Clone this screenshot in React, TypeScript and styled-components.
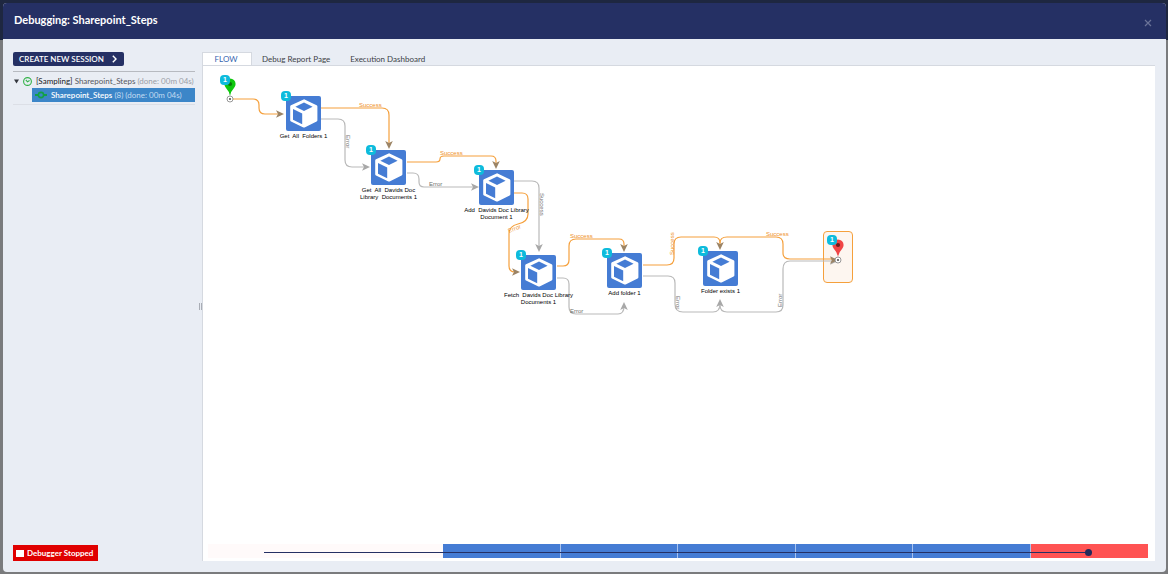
import React, { useState } from "react";
import styled, { createGlobalStyle, css } from "styled-components";

const GlobalStyle = createGlobalStyle`
  *, *::before, *::after { box-sizing: border-box; }
  body {
    margin: 0;
    font-family: Lato, "Open Sans", sans-serif;
    background: #7a7b7d;
  }
  button { font-family: inherit; border: 0; padding: 0; margin: 0; cursor: pointer; }
`;

const navy = "#253064";
const nodeBlue = "#457cd4";
const activeEdge = "#f5a03c";
const idleEdge = "#b9b9b9";

const Backdrop = styled.div`
  min-height: 100vh;
  padding: 3px 2px 2px 3px;
  display: flex;
  background: linear-gradient(#1e2740 0 40px, #7a7b7d 40px);
`;

const Dialog = styled.section`
  flex: 1;
  display: flex;
  flex-direction: column;
  min-width: 0;
  border-radius: 4px;
  overflow: hidden;
  background: #e9edf4;
`;

const Header = styled.header`
  height: 36px;
  display: flex;
  align-items: center;
  justify-content: space-between;
  padding: 0 14px 2px 11px;
  background: ${navy};
`;

const Title = styled.h1`
  margin: 0;
  font-size: 11px;
  line-height: 14px;
  font-weight: 700;
  color: #fff;
`;

const CloseButton = styled.button`
  display: flex;
  margin-top: 6px;
  background: none;
  color: #6b7398;
`;

const Body = styled.div`
  flex: 1;
  display: flex;
  min-height: 0;
  padding: 13px 11px 11px 10px;
`;

const Sidebar = styled.aside`
  width: 182px;
  flex: none;
  display: flex;
  flex-direction: column;
  align-items: stretch;
`;

const NewSession = styled.button`
  align-self: flex-start;
  width: 111px;
  height: 14px;
  padding: 0 7px 0 6px;
  display: flex;
  align-items: center;
  justify-content: space-between;
  border-radius: 2px;
  background: ${navy};
  color: #fff;
  font-size: 8px;
  line-height: 14px;
  font-weight: 600;
`;

const Tree = styled.ul`
  list-style: none;
  margin: 5px 0 0;
  padding: 2px 0;
  border-top: 1px solid #b7bac0;
  border-bottom: 1px solid #dcdfe6;
`;

const TreeRow = styled.li<{ $selected?: boolean }>`
  display: flex;
  align-items: center;
  gap: 4px;
  height: 14px;
  padding-left: 1px;
  font-size: 8px;
  line-height: 14px;
  white-space: nowrap;
  color: #55585f;
  ${(p) =>
    p.$selected &&
    css`
      margin-left: 19px;
      padding-left: 3px;
      background: #3c86c8;
      color: #fff;
    `}
`;

const Phase = styled.span`
  color: #16181d;
`;

const Muted = styled.span<{ $onBlue?: boolean }>`
  color: ${(p) => (p.$onBlue ? "#c3dcf2" : "#9a9da6")};
`;

const Strong = styled.span`
  font-weight: 600;
`;

const Status = styled.div`
  margin-top: auto;
  align-self: flex-start;
  width: 85px;
  height: 16px;
  display: flex;
  align-items: center;
  gap: 3px;
  padding-left: 3px;
  background: #e00000;
  color: #fff;
  font-size: 8px;
  line-height: 16px;
  font-weight: 700;
  white-space: nowrap;
`;

const StopSquare = styled.span`
  flex: none;
  width: 8px;
  height: 7px;
  background: #fff;
`;

const Splitter = styled.div`
  width: 7px;
  flex: none;
  display: flex;
  align-items: center;
  justify-content: flex-end;
`;

const Grip = styled.span`
  width: 3px;
  height: 7px;
  border: solid #a9adb5;
  border-width: 0 1px;
`;

const Main = styled.main`
  flex: 1;
  min-width: 0;
  display: flex;
  flex-direction: column;
`;

const TabBar = styled.div`
  display: flex;
  height: 14px;
`;

const Tab = styled.button<{ $active?: boolean }>`
  height: 14px;
  padding: 0 10px;
  background: none;
  color: #3c3f46;
  font-size: 8px;
  line-height: 14px;
  white-space: nowrap;
  ${(p) =>
    p.$active &&
    css`
      width: 50px;
      padding: 0 2px 2px 0;
      border: 1px solid #d5d9e0;
      border-bottom: 0;
      background: #fff;
      color: #3565b0;
      line-height: 12px;
    `}
`;

const Panel = styled.div`
  flex: 1;
  display: flex;
  flex-direction: column;
  justify-content: space-between;
  margin-top: -1px;
  border: solid #d5d9e0;
  border-width: 1px 0 0 1px;
  background: #fff;
`;

const Canvas = styled.div`
  position: relative;
  flex: 1;
  min-height: 260px;
  overflow: hidden;
  font-family: "Liberation Sans", Arial, sans-serif;
`;

const Wires = styled.svg`
  display: block;
  position: absolute;
  inset: 0;
  width: 100%;
  height: 100%;
`;

const WireLabel = styled.text<{ $active?: boolean }>`
  font-size: 6px;
  fill: ${(p) => (p.$active ? "#ee8f1e" : "#6e6e6e")};
`;

const NodeBox = styled.div`
  position: absolute;
  width: 35px;
  height: 35px;
  display: flex;
  flex-direction: column;
  align-items: center;
`;

const NodeTile = styled.div`
  flex: none;
  width: 35px;
  height: 35px;
  border-radius: 2px;
  background: ${nodeBlue};
`;

const NodeLabel = styled.div`
  margin-top: 2px;
  font-size: 6px;
  line-height: 7px;
  text-align: center;
  white-space: pre;
  color: #000;
`;

const Badge = styled.span`
  position: absolute;
  left: -5px;
  top: -5px;
  width: 10px;
  height: 10px;
  border-radius: 4px;
  background: #0dbbdc;
  color: #fff;
  font-size: 7px;
  line-height: 10px;
  font-weight: 700;
  text-align: center;
`;

const PinBox = styled.div<{ $framed?: boolean }>`
  position: absolute;
  width: 30px;
  height: 52px;
  border-radius: 4px;
  ${(p) =>
    p.$framed &&
    css`
      border: 1px solid ${activeEdge};
      background: #fdf6f0;
    `}
`;

const PinBadge = styled(Badge)`
  left: 4px;
  top: 4px;
`;

const Timeline = styled.div`
  display: grid;
  align-items: center;
  height: 14px;
  margin: 0 7px 3px 5px;
`;

const Segments = styled.div`
  grid-area: 1 / 1;
  display: grid;
  grid-template-columns: repeat(8, 1fr);
  height: 14px;
`;

const segmentColors = { idle: "#fffafa", step: nodeBlue, error: "#ff5353" };

const Segment = styled.span<{ $kind: keyof typeof segmentColors }>`
  background: ${(p) => segmentColors[p.$kind]};
  border-right: ${(p) => (p.$kind === "step" ? "1px solid #a9c3ee" : "0")};
`;

const Scrubber = styled.input`
  grid-area: 1 / 1;
  justify-self: center;
  width: 88%;
  height: 7px;
  margin: 2px 0 0;
  appearance: none;
  background: linear-gradient(${navy}, ${navy}) center / 100% 1px no-repeat;
  &::-webkit-slider-thumb {
    appearance: none;
    width: 7px;
    height: 7px;
    border-radius: 50%;
    background: #22295a;
  }
`;

type Step = { x: number; y: number; label: string };

const steps: Step[] = [
  { x: 83, y: 30, label: "Get  All  Folders 1" },
  { x: 168, y: 84, label: "Get  All  Davids Doc\nLibrary  Documents 1" },
  { x: 276, y: 104, label: "Add  Davids Doc Library\nDocument 1" },
  { x: 318, y: 189, label: "Fetch  Davids Doc Library\nDocuments 1" },
  { x: 404, y: 187, label: "Add folder 1" },
  { x: 500, y: 185, label: "Folder exists 1" },
];

type Wire = { d: string; active?: boolean; tip: [number, number, number] };

/* tip: x, y and rotation of the arrow head, 0 pointing right */
const wires: Wire[] = [
  { d: "M118 53H135Q142 53 142 60V94Q142 101 149 101H164", tip: [167, 101, 0] },
  { d: "M204 107H210Q216 107 216 113V116Q216 121 221 121H273", tip: [276, 121, 0] },
  { d: "M311 115H329Q336 115 336 122V183", tip: [336, 186, 90] },
  { d: "M354 212H360Q366 212 366 218V241Q366 248 373 248H415Q421 248 421 240", tip: [421, 236, -90] },
  { d: "M440 210H465Q472 210 472 217V238Q472 246 480 246H510Q517 246 517 238", tip: [517, 233, -90] },
  { d: "M517 239Q517 246 524 246H573Q580 246 580 239V203Q580 195 587 195H632", tip: [635, 195, 0] },
  { active: true, d: "M30 33H50Q56 33 56 39V42Q56 48 62 48H77", tip: [81, 48, 0] },
  { active: true, d: "M118 42H179Q186 42 186 49V79", tip: [186, 83, 90] },
  { active: true, d: "M204 96H233Q237 96 237 93Q237 90 241 90H288Q293 90 293 95V98", tip: [293, 103, 90] },
  { active: true, d: "M311 127H319Q325 127 325 133V148Q325 156 315 158Q306 160 306 168V200Q306 206 312 206", tip: [317, 206, 0] },
  { active: true, d: "M354 200H360Q366 200 366 194V180Q366 173 373 173H416Q421 173 421 178V181", tip: [421, 186, 90] },
  { active: true, d: "M440 199H464Q471 199 471 192V178Q471 171 478 171H511Q517 171 517 177V180", tip: [517, 184, 90] },
  { active: true, d: "M517 177Q517 171 524 171H573Q580 171 580 178V187Q580 193 587 193H632", tip: [635, 194, 0] },
];

type WireName = { x: number; y: number; text: string; active?: boolean; turn?: number };

const wireNames: WireName[] = [
  { x: 156, y: 41, text: "Success", active: true },
  { x: 143, y: 69, text: "Error", turn: 90 },
  { x: 237, y: 89, text: "Success", active: true },
  { x: 226, y: 120, text: "Error" },
  { x: 337, y: 127, text: "Success", turn: 90 },
  { x: 306, y: 167, text: "Error", active: true, turn: -22 },
  { x: 367, y: 172, text: "Success", active: true },
  { x: 367, y: 247, text: "Error" },
  { x: 471, y: 189, text: "Success", active: true, turn: -90 },
  { x: 473, y: 230, text: "Error", turn: 90 },
  { x: 563, y: 170, text: "Success", active: true },
  { x: 579, y: 241, text: "Error", turn: -90 },
];

function CubeIcon() {
  return (
    <svg width="35" height="35" viewBox="0 0 35 35" aria-hidden="true">
      <path
        d="M17.6 3.4Q18.1 3.2 18.6 3.4L30.6 9.2Q31.4 9.6 31.4 10.4V24.2Q31.4 25 30.6 25.4L18.6 31.4Q18 31.7 17.4 31.4L5 25.4Q4.2 25 4.2 24.2V10.4Q4.2 9.6 5 9.2Z"
        fill="#fff"
      />
      <path d="M18 6.6L26.6 10.7L18 15L9.4 10.7Z" fill={nodeBlue} />
      <path d="M7 13L16.2 17.6V28.2L7 23.8Z" fill={nodeBlue} />
    </svg>
  );
}

function Pin({ x, y, color, hole }: { x: number; y: number; color: string; hole: string }) {
  return (
    <g>
      <path
        d={`M${x} ${y - 3}Q${x - 1} ${y - 8} ${x - 4} ${y - 11}A5.6 5.6 0 1 1 ${x + 4} ${y - 11}Q${x + 1} ${y - 8} ${x} ${y - 3}Z`}
        fill={color}
      />
      <circle cx={x} cy={y - 15} r="2.1" fill={hole} />
      <circle cx={x} cy={y} r="3" fill="#fff" stroke="#808080" strokeWidth="0.8" />
      <circle cx={x} cy={y} r="1.1" fill="#555" />
    </g>
  );
}

function Flow() {
  return (
    <Canvas>
      <PinBox $framed style={{ left: 620, top: 165 }} />
      <Wires role="img" aria-label="Flow diagram">
        {wires.map((w) => (
          <g key={w.d}>
            <path d={w.d} fill="none" stroke={w.active ? activeEdge : idleEdge} strokeWidth="1.2" />
            <path
              d="M0 0L-8 -3.8L-6 0L-8 3.8Z"
              fill={w.active ? "#9c8465" : "#a8a8a8"}
              transform={`translate(${w.tip[0]} ${w.tip[1]}) rotate(${w.tip[2]})`}
            />
          </g>
        ))}
        {wireNames.map((n) => (
          <WireLabel
            key={`${n.x}-${n.y}`}
            $active={n.active}
            transform={`translate(${n.x} ${n.y}) rotate(${n.turn ?? 0})`}
          >
            {n.text}
          </WireLabel>
        ))}
        <Pin x={27} y={33} color="#0fc80f" hole="#087a08" />
        <Pin x={635} y={194} color="#f04545" hole="#6e1c1c" />
      </Wires>
      {steps.map((s) => (
        <NodeBox key={s.label} style={{ left: s.x, top: s.y }}>
          <NodeTile>
            <CubeIcon />
          </NodeTile>
          <NodeLabel>{s.label}</NodeLabel>
          <Badge>1</Badge>
        </NodeBox>
      ))}
      <PinBox style={{ left: 13, top: 5 }}>
        <PinBadge>1</PinBadge>
      </PinBox>
      <PinBox style={{ left: 620, top: 165 }}>
        <PinBadge>1</PinBadge>
      </PinBox>
    </Canvas>
  );
}

const tabs = ["FLOW", "Debug Report Page", "Execution Dashboard"];
const segments: (keyof typeof segmentColors)[] = ["idle", "idle", "step", "step", "step", "step", "step", "error"];

export default function App() {
  const [tab, setTab] = useState("FLOW");
  const [position, setPosition] = useState(7);

  return (
    <>
      <GlobalStyle />
      <Backdrop>
        <Dialog role="dialog" aria-labelledby="dialog-title">
          <Header>
            <Title id="dialog-title">Debugging: Sharepoint_Steps</Title>
            <CloseButton aria-label="Close">
              <svg width="8" height="8" viewBox="0 0 8 8" stroke="currentColor" strokeWidth="1.2">
                <path d="M1 1L7 7M7 1L1 7" />
              </svg>
            </CloseButton>
          </Header>
          <Body>
            <Sidebar>
              <NewSession>
                CREATE NEW SESSION
                <svg width="5" height="8" viewBox="0 0 5 8" fill="none" stroke="#fff" strokeWidth="1.4">
                  <path d="M0.8 0.8L4 4L0.8 7.2" />
                </svg>
              </NewSession>
              <Tree>
                <TreeRow>
                  <svg width="5" height="5" viewBox="0 0 5 5">
                    <path d="M0 0.5H5L2.5 4.5Z" fill="#33363d" />
                  </svg>
                  <svg width="9" height="9" viewBox="0 0 9 9" fill="none" stroke="#35b34a" strokeWidth="1.1">
                    <circle cx="4.5" cy="4.5" r="3.9" />
                    <path d="M2.8 2.8L4.5 4.8L6.6 3.6" />
                  </svg>
                  <span>
                    <Phase>[Sampling]</Phase> Sharepoint_Steps <Muted>(done: 00m 04s)</Muted>
                  </span>
                </TreeRow>
                <TreeRow $selected>
                  <svg width="12" height="8" viewBox="0 0 12 8">
                    <path d="M0 4H3M9 4H12" stroke="#12a048" strokeWidth="1.8" />
                    <circle cx="6" cy="4" r="2.6" fill="none" stroke="#12a048" strokeWidth="1.6" />
                  </svg>
                  <span>
                    <Strong>Sharepoint_Steps</Strong> <Muted $onBlue>(8) (done: 00m 04s)</Muted>
                  </span>
                </TreeRow>
              </Tree>
              <Status role="status">
                <StopSquare />
                Debugger Stopped
              </Status>
            </Sidebar>
            <Splitter role="separator" aria-orientation="vertical">
              <Grip />
            </Splitter>
            <Main>
              <TabBar role="tablist">
                {tabs.map((t) => (
                  <Tab key={t} role="tab" aria-selected={t === tab} $active={t === tab} onClick={() => setTab(t)}>
                    {t}
                  </Tab>
                ))}
              </TabBar>
              <Panel role="tabpanel">
                <Flow />
                <Timeline>
                  <Segments>
                    {segments.map((kind, i) => (
                      <Segment key={i} $kind={kind} />
                    ))}
                  </Segments>
                  <Scrubber
                    type="range"
                    aria-label="Execution step"
                    min={0}
                    max={7}
                    value={position}
                    onChange={(e) => setPosition(Number(e.target.value))}
                  />
                </Timeline>
              </Panel>
            </Main>
          </Body>
        </Dialog>
      </Backdrop>
    </>
  );
}
